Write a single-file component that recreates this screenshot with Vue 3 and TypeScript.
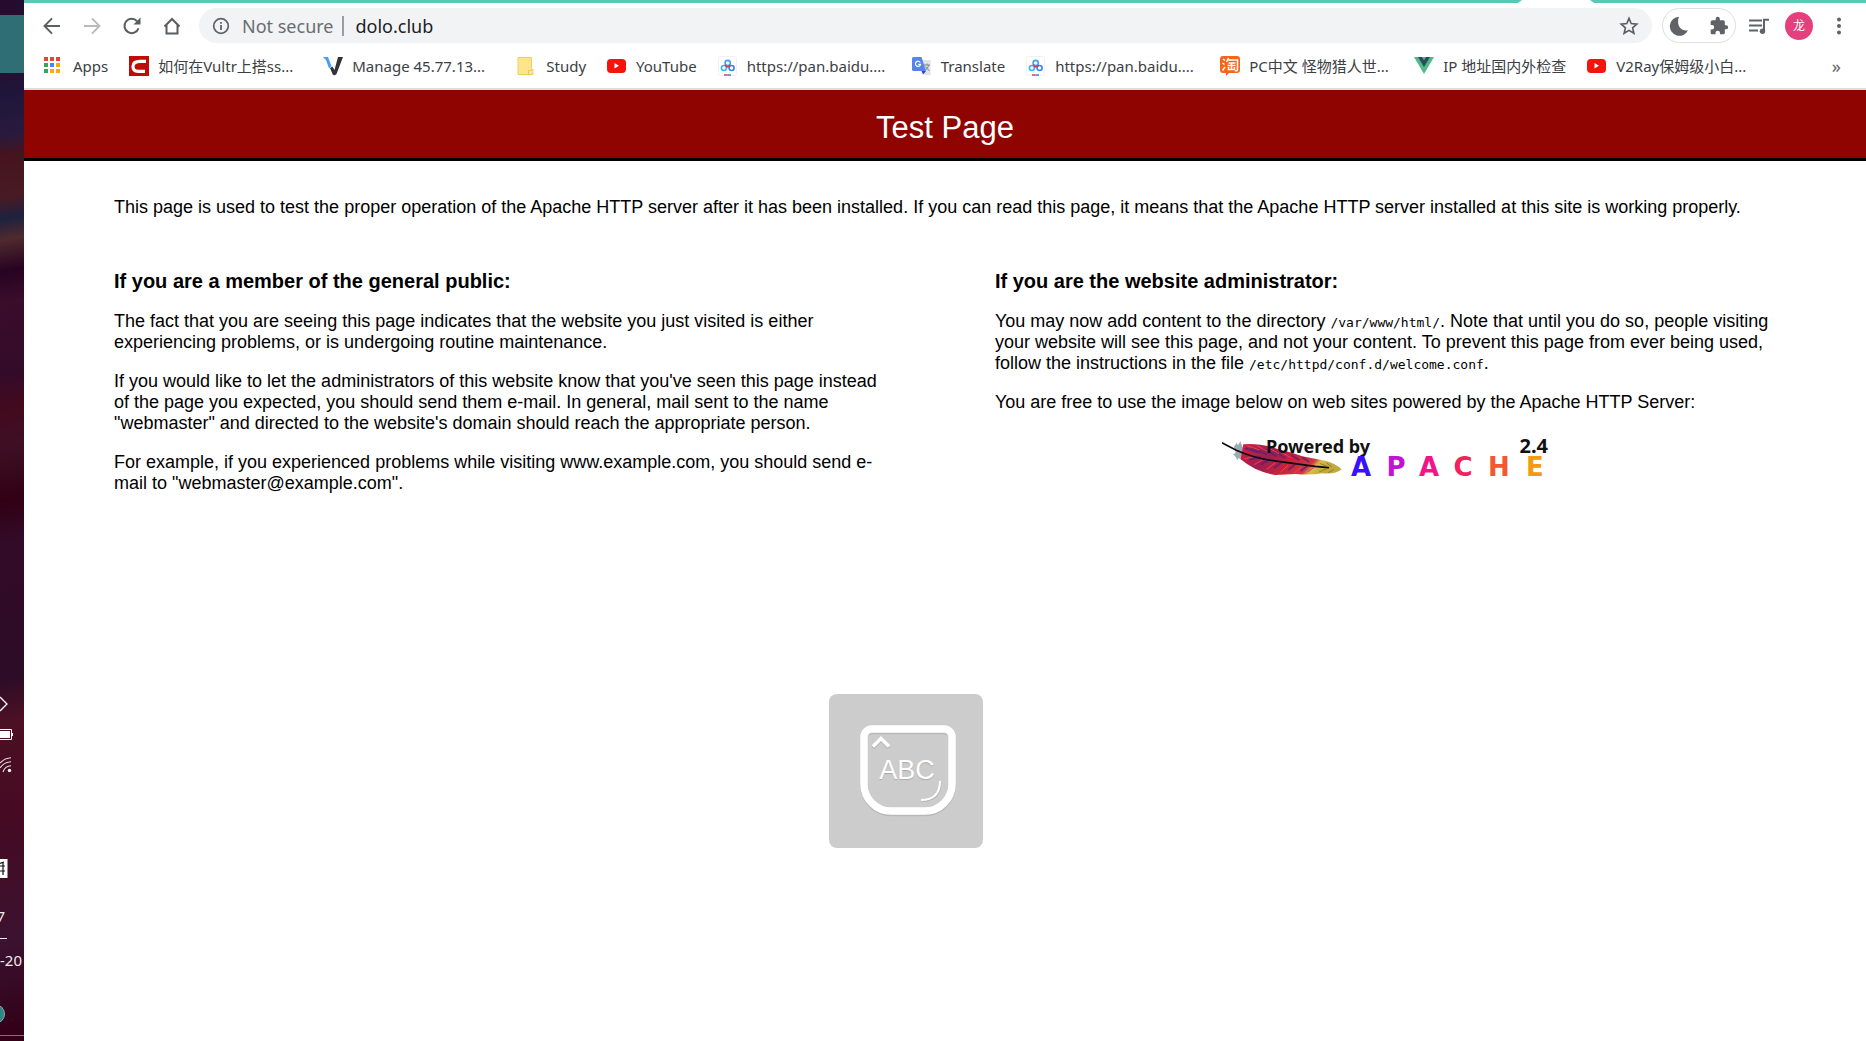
<script setup lang="ts">
import { ref } from 'vue'

type IconName = 'apps' | 'c' | 'vultr' | 'note' | 'youtube' | 'pan' | 'translate' | 'tao' | 'vue'

interface Bookmark {
  icon: IconName
  label: string
  clipped?: boolean
}

const address = ref('dolo.club')

const bookmarks: Bookmark[] = [
  { icon: 'apps', label: 'Apps' },
  { icon: 'c', label: '如何在Vultr上搭ss...', clipped: true },
  { icon: 'vultr', label: 'Manage 45.77.13...', clipped: true },
  { icon: 'note', label: 'Study' },
  { icon: 'youtube', label: 'YouTube' },
  { icon: 'pan', label: 'https://pan.baidu....', clipped: true },
  { icon: 'translate', label: 'Translate' },
  { icon: 'pan', label: 'https://pan.baidu....', clipped: true },
  { icon: 'tao', label: 'PC中文 怪物猎人世...', clipped: true },
  { icon: 'vue', label: 'IP 地址国内外检查' },
  { icon: 'youtube', label: 'V2Ray保姆级小白...', clipped: true },
]

const appColors = ['#ea4335', '#ea4335', '#ea4335', '#34a853', '#4285f4', '#fbab05', '#34a853', '#fbab05', '#fbab05']

const wordmark = [
  { letter: 'A', x: 139, color: '#3a10ff' },
  { letter: 'P', x: 174, color: '#c112d6' },
  { letter: 'A', x: 207, color: '#f31489' },
  { letter: 'C', x: 241, color: '#f2225a' },
  { letter: 'H', x: 277, color: '#f4582f' },
  { letter: 'E', x: 313, color: '#f59a0c' },
]
</script>

<template>
  <div class="screen">
    <aside class="desktop">
      <div class="tile"></div>
      <div class="tray">
        <svg class="tray-chevron" width="24" height="18" viewBox="0 0 24 18"><path d="M0 2l7 7-7 7" fill="none" stroke="#fff" stroke-width="1.3" /></svg>
        <svg class="tray-battery" width="24" height="12" viewBox="0 0 24 12"><path d="M0 .5h11.5v10H0" fill="none" stroke="#fff" /><path d="M0 2h10v7H0zM12 4h1v3h-1z" fill="#fff" /></svg>
        <svg class="tray-wifi" width="24" height="16" viewBox="0 0 24 16">
          <g fill="none" stroke="#e8dfe4" stroke-width="1.1"><path d="M0 6Q5 1 11 .8M0 11Q4 5 11 4.8M3 15Q5 9 11 8.8" /></g>
          <circle cx="9.500" cy="13.500" r="1.700" fill="#fff" />
        </svg>
        <svg class="tray-ime" width="24" height="19" viewBox="0 0 24 19"><path d="M0 0h7.500v19H0z" fill="#fff" /><path d="M0 4.500l4-1.500M0 7h5M0 12h5M3 3v13" stroke="#111" stroke-width="1.200" /></svg>
        <span class="tray-text tray-time">7</span>
        <span class="tray-rule"></span>
        <span class="tray-text">-20</span>
        <svg class="tray-orb" width="24" height="20" viewBox="0 0 24 20"><circle cx="-5" cy="10" r="9.500" fill="#2e8585" stroke="#93a6ab" /></svg>
        <span class="tray-edge"></span>
      </div>
    </aside>

    <div class="browser">
      <div class="tabs"><span class="tab-foot"></span></div>
      <nav class="toolbar" aria-label="Navigation">
        <button class="tool" aria-label="Back"><svg width="20" height="20" viewBox="0 0 20 20"><path d="M18 10H3M10 2.300L2.500 10l7.500 7.700" fill="none" stroke="#5a5d61" stroke-width="1.900" /></svg></button>
        <button class="tool" aria-label="Forward"><svg width="20" height="20" viewBox="0 0 20 20"><path d="M2 10h15M10 2.300l7.500 7.700-7.500 7.700" fill="none" stroke="#b8babc" stroke-width="1.900" /></svg></button>
        <button class="tool" aria-label="Reload"><svg width="20" height="20" viewBox="0 0 20 20"><path d="M16.500 12.200A7.200 7.200 0 1 1 15.200 5.300" fill="none" stroke="#5a5d61" stroke-width="2" /><path d="M18.500 1.500v7h-7z" fill="#5a5d61" /></svg></button>
        <button class="tool" aria-label="Home"><svg width="20" height="20" viewBox="0 0 20 20"><path d="M2.500 10.500L10 3l7.500 7.500M4.500 9v8.500h11V9" fill="none" stroke="#5a5d61" stroke-width="2" /></svg></button>

        <div class="omnibox">
          <button class="security">
            <svg width="18" height="18" viewBox="0 0 18 18"><circle cx="9" cy="9" r="7.300" fill="none" stroke="#5f6368" stroke-width="1.700" /><path d="M8.100 8h1.800v5H8.100zM8.100 4.900h1.800v1.800H8.100z" fill="#5f6368" /></svg>
            <span>Not secure</span>
          </button>
          <span class="divider"></span>
          <input v-model="address" class="address" type="text" aria-label="Address" />
          <button class="star" aria-label="Bookmark this page"><svg width="20" height="20" viewBox="0 0 20 20"><path d="M10 2.400l2.200 5.200 5.600.5-4.200 3.700 1.300 5.500L10 14.400l-4.900 2.900 1.300-5.500-4.200-3.700 5.600-.5z" fill="none" stroke="#5a5d61" stroke-width="1.600" /></svg></button>
        </div>

        <div class="extensions">
          <button class="tool" aria-label="Dark mode"><svg width="20" height="20" viewBox="0 0 20 20"><path d="M10 .800A9.500 9.500 0 1 0 19 14.200C13.500 15.800 6.500 10.500 10 .800z" fill="#5f6368" /></svg></button>
          <button class="tool" aria-label="Extensions"><svg width="20" height="20" viewBox="0 0 24 24"><path d="M20.500 11H19V7c0-1.100-.9-2-2-2h-4V3.500a2.500 2.500 0 0 0-5 0V5H4c-1.100 0-2 .9-2 2v3.800h1.500a2.700 2.700 0 0 1 0 5.400H2V20c0 1.100.9 2 2 2h3.800v-1.500a2.700 2.700 0 0 1 5.400 0V22H17c1.100 0 2-.9 2-2v-4h1.500a2.500 2.500 0 0 0 0-5z" fill="#5f6368" /></svg></button>
        </div>
        <button class="tool" aria-label="Media"><svg width="22" height="20" viewBox="0 0 22 20"><path d="M1 4.500h13M1 9.500h13M1 14.500h9" stroke="#5f6368" stroke-width="2" /><path d="M16 15V3.800h5" fill="none" stroke="#5f6368" stroke-width="2" /><circle cx="14.500" cy="15.300" r="2.700" fill="#5f6368" /></svg></button>
        <button class="tool" aria-label="Profile"><span class="avatar">龙</span></button>
        <button class="tool" aria-label="Menu"><svg width="6" height="20" viewBox="0 0 6 20"><g fill="#5f6368"><circle cx="3" cy="3.500" r="2" /><circle cx="3" cy="10" r="2" /><circle cx="3" cy="16.500" r="2" /></g></svg></button>
      </nav>

      <nav class="bookmarks" aria-label="Bookmarks">
        <a v-for="(mark, i) in bookmarks" :key="i" class="bookmark" href="#">
          <svg class="favicon" width="20" height="20" viewBox="0 0 20 20" aria-hidden="true">
            <template v-if="mark.icon === 'apps'">
              <rect v-for="(color, n) in appColors" :key="n" :x="(n % 3) * 6" :y="1 + Math.floor(n / 3) * 6" width="4" height="4" :fill="color" />
            </template>
            <template v-else-if="mark.icon === 'c'">
              <path d="M0 0h20v20H0z" fill="#c10c05" /><path d="M17 5.300h-6C6 5.300 4 7 4 10.500s1.500 4.800 5 4.800h7" fill="none" stroke="#fff" stroke-width="3.200" />
            </template>
            <template v-else-if="mark.icon === 'vultr'">
              <path d="M0 1h5l3.500 9-2.500 2.500-3-8.500z" fill="#4c9bf5" /><path d="M15 1h5l-6.500 17q-2.500 2.500-4 0L7 12l2.500-1.500 2 3.500z" fill="#30343a" />
            </template>
            <template v-else-if="mark.icon === 'note'">
              <path d="M1 1.500h13.500v12h1.500v5H1z" fill="#fce58d" stroke="#ecd05f" /><path d="M11.500 18.500v-4h3" fill="none" stroke="#e9c94f" />
            </template>
            <template v-else-if="mark.icon === 'youtube'">
              <rect x="0" y="3" width="19" height="14" rx="4" fill="#f5130b" /><path d="M7.500 7v5.500l4.500-2.700z" fill="#fff" />
            </template>
            <template v-else-if="mark.icon === 'pan'">
              <rect x=".5" y=".5" width="18" height="19" rx="2" fill="#fff" stroke="#f1f1f3" />
              <g fill="none" stroke-width="1.600"><circle cx="9.700" cy="7" r="2.600" stroke="#3ba2fa" /><circle cx="5.900" cy="12" r="2.500" stroke="#31b9f5" /><circle cx="13.600" cy="12" r="2.500" stroke="#3287f3" /><path d="M7.200 8.500Q9.500 13 12 9" stroke="#ed344b" /></g>
              <path d="M6 19h3.500" stroke="#e8384f" stroke-width="1.500" /><path d="M9.500 19H13" stroke="#397be8" stroke-width="1.500" />
            </template>
            <template v-else-if="mark.icon === 'translate'">
              <path d="M8 4h10.500v15H12z" fill="#dfe2e7" /><path d="M1.500 1h8l4.500 14H1.500Q0 15 0 13.500v-11Q0 1 1.500 1z" fill="#5684ed" /><path d="M9.500 15H14l-3 3.500z" fill="#2649b5" />
              <path d="M8.300 6.500A2.600 2.600 0 1 0 8.600 8.400H6.300" fill="none" stroke="#fff" stroke-width="1.200" /><path d="M12 9h6M15 7.500V9m1.800 0Q16 12.500 12.800 14.500M13.300 10.500Q15 13.500 17.500 14.500" fill="none" stroke="#7b858e" />
            </template>
            <template v-else-if="mark.icon === 'tao'">
              <path d="M3 0h14q3 0 3 3v11q0 3-3 3H9l-3 3v-3H3q-3 0-3-3V3q0-3 3-3z" fill="#f4661b" />
              <path d="M3 3l2 1.500M2.500 7l2 1.500M2.500 14.500L5 11M8.500 2L6.500 6M8 4h9.500v9.500q0 1.500-2.500 1.500M8.500 7h7M7.500 9.500h8M11.500 7v6M8.500 11v2.500h6V11" fill="none" stroke="#fff" stroke-width="1.500" />
            </template>
            <template v-else>
              <path d="M0 1h20L10 18z" fill="#4dba87" /><path d="M4 1h4l2 3.500L12 1h4l-6 10z" fill="#35495e" />
            </template>
          </svg>
          <span class="label" :class="{ clipped: mark.clipped }">{{ mark.label }}</span>
        </a>
        <button class="more" aria-label="More bookmarks">»</button>
      </nav>

      <main class="page">
        <h1>Test Page</h1>
        <div class="content">
          <p>This page is used to test the proper operation of the Apache HTTP server after it has been installed. If you can read this page, it means that the Apache HTTP server installed at this site is working properly.</p>
          <div class="columns">
            <section>
              <h2>If you are a member of the general public:</h2>
              <p>The fact that you are seeing this page indicates that the website you just visited is either experiencing problems, or is undergoing routine maintenance.</p>
              <p>If you would like to let the administrators of this website know that you've seen this page instead of the page you expected, you should send them e-mail. In general, mail sent to the name "webmaster" and directed to the website's domain should reach the appropriate person.</p>
              <p>For example, if you experienced problems while visiting www.example.com, you should send e-mail to "webmaster@example.com".</p>
            </section>
            <section>
              <h2>If you are the website administrator:</h2>
              <p>You may now add content to the directory <code>/var/www/html/</code>. Note that until you do so, people visiting your website will see this page, and not your content. To prevent this page from ever being used, follow the instructions in the file <code>/etc/httpd/conf.d/welcome.conf</code>.</p>
              <p>You are free to use the image below on web sites powered by the Apache HTTP Server:</p>
              <svg class="apache" width="326" height="44" viewBox="0 0 326 44" role="img" aria-label="Powered by Apache 2.4">
                <defs>
                  <linearGradient id="plume" x1="0" x2="1" y1="0" y2="0.300">
                    <stop offset="0" stop-color="#d8213d" /><stop offset="0.350" stop-color="#9b2050" /><stop offset="0.600" stop-color="#c7213d" /><stop offset="0.820" stop-color="#d13a3e" /><stop offset="0.880" stop-color="#d8b94c" /><stop offset="1" stop-color="#c3a83d" />
                  </linearGradient>
                </defs>
                <svg width="122" height="40" viewBox="69 51 366 120">
                  <path d="M105 80l8-12 4 8 7-12 5 13 6 13-6 30-11-6-3 6-7-12-6-4 8-6z" fill="#9eabb2" />
                  <path d="M133 73q50-5 112 17 40 9 65 19l68 13q32 8 50 26-16 15-58 12-35 6-80 2l-62 3q-60-10-103-47z" fill="url(#plume)" />
                  <g fill="none" stroke="#592078" stroke-width="6" opacity=".75"><path d="M138 85l45 13M155 82l48 21M190 86l43 22M225 94l34 20M278 105l23 16M310 112l21 14M150 119l35-8M185 133l30-15M225 145l24-20M268 150l20-17M305 153l20-16" /></g>
                  <g fill="none" stroke="#ed4254" stroke-width="3"><path d="M145 77l35 13M174 77l31 17M207 82l33 20M245 95l31 19M137 117l30-8M165 134l30-17M203 148l26-20M244 157l24-22M285 159l24-20M327 155l20-14" /></g>
                  <path d="M70 69l42 22q50 23 110 31t126 17l40 4" fill="none" stroke="#0d0710" stroke-width="5" stroke-linecap="round" />
                  <path d="M362 130l22 9M382 128l17 13M360 156l23-10M387 158l17-9" stroke="#8e832f" stroke-width="3" />
                </svg>
                <text x="44" y="16" class="powered">Powered by</text>
                <text x="326" y="16" class="version">2.4</text>
                <text v-for="(glyph, i) in wordmark" :key="i" :x="glyph.x" y="39" class="mark" :fill="glyph.color">{{ glyph.letter }}</text>
              </svg>
            </section>
          </div>
        </div>
      </main>
    </div>

    <div class="ime" aria-hidden="true">
      <svg width="154" height="154" viewBox="0 0 154 154">
        <path d="M43 36.500h72a8 8 0 0 1 8 8v47a27 27 0 0 1-27 27H62a27 27 0 0 1-27-27v-47a8 8 0 0 1 8-8z" fill="none" stroke="#b8b8b8" stroke-width="7.500" />
        <path d="M43 35h72a8 8 0 0 1 8 8v47a27 27 0 0 1-27 27H62a27 27 0 0 1-27-27V43a8 8 0 0 1 8-8z" fill="none" stroke="#fff" stroke-width="7.500" />
        <path d="M44 54l8-8 8 8" fill="none" stroke="#b5b5b5" stroke-width="3.500" />
        <path d="M44 52.500l8-8 8 8" fill="none" stroke="#fff" stroke-width="3.500" />
        <path d="M111.500 88q0 19-19 19" fill="none" stroke="#b5b5b5" stroke-width="2" />
        <path d="M111 87q0 19-19 19" fill="none" stroke="#fff" stroke-width="2" />
        <text x="78" y="85">ABC</text>
      </svg>
    </div>
  </div>
</template>

<style>
body {
  margin: 0;
  background: #fff;
}
</style>

<style scoped>
.screen {
  display: flex;
  position: relative;
  min-height: 100vh;
  font-family: "Noto Sans", "Noto Sans CJK SC", sans-serif;
}

button {
  padding: 0;
  border: 0;
  background: none;
  font: inherit;
  color: inherit;
}

.desktop {
  display: flex;
  flex: none;
  flex-direction: column;
  width: 24px;
  overflow: hidden;
  background: linear-gradient(170deg, #270b2e 0%, #270f2f 6%, #1e163a 9%, #281a3e 13%, #46131f 15%, #471b24 19%, #1e213e 21%, #4f2a2e 23%, #270322 26%, #3a0d2a 29%, #330b29 36%, #430a1d 39%, #3e0f24 43%, #310014 48%, #330b28 52%, #2c0c27 65%, #4c1024 69%, #460a22 78%, #3b1230 90%, #330018 99%);
}

.tile {
  height: 58px;
  margin-top: 15px;
  background: #2e6e74;
}

.tray {
  display: flex;
  flex-direction: column;
  margin-top: auto;
}

.tray svg {
  display: block;
}

.tray-battery {
  margin-top: 16px;
}

.tray-wifi {
  margin-top: 16px;
}

.tray-ime {
  margin-top: 86px;
}

.tray-text {
  height: 20px;
  color: #f2eaf0;
  font-size: 15px;
  line-height: 20px;
  white-space: nowrap;
}

.tray-time {
  display: flex;
  justify-content: flex-end;
  width: 5px;
  margin-top: 28px;
}

.tray-rule {
  width: 7px;
  height: 1px;
  margin: 12px 0 11px;
  background: #f2eaf0;
}

.tray-orb {
  margin-top: 34px;
}

.tray-edge {
  height: 1px;
  margin: 11px 0 5px;
  background: #8d6680;
}

.browser {
  flex: 1;
  min-width: 0;
  background: #fff;
}

.tabs {
  display: flex;
  justify-content: flex-end;
  height: 3px;
  background: #58c9b5;
}

.tab-foot {
  width: 76px;
  margin-right: 272px;
  background: #fff;
  clip-path: polygon(4px 0, calc(100% - 4px) 0, 100% 100%, 0 100%);
}

.toolbar {
  display: flex;
  align-items: center;
  padding: 5px 7px 0 8px;
}

.tool {
  display: flex;
  flex: none;
  align-items: center;
  justify-content: center;
  width: 40px;
  height: 35px;
}

.omnibox {
  display: flex;
  flex: 1;
  align-items: center;
  min-width: 0;
  height: 35px;
  margin: 0 7px;
  padding: 0 13px;
  border-radius: 18px;
  background: #f1f3f4;
  font-size: 18px;
}

.security {
  display: flex;
  align-items: center;
  gap: 12px;
  color: #6a6d71;
}

.divider {
  width: 2px;
  height: 20px;
  margin: 0 12px 0 8px;
  background: #9a9da1;
}

.address {
  flex: 1;
  min-width: 0;
  padding: 0;
  border: 0;
  outline: 0;
  background: none;
  color: #202124;
  font: inherit;
}

.star {
  display: flex;
}

.extensions {
  display: flex;
  position: relative;
}

.extensions::before {
  content: "";
  position: absolute;
  inset: 0 3px;
  border: 1px solid #dcdee0;
  border-radius: 18px;
}

.avatar {
  width: 28px;
  height: 28px;
  border-radius: 50%;
  background: #e5407d;
  color: #fff;
  font-size: 12px;
  line-height: 28px;
  text-align: center;
}

.bookmarks {
  display: flex;
  align-items: center;
  gap: 21px;
  height: 45px;
  padding: 0 25px 0 20px;
  border-bottom: 2px solid #dadfe0;
  font-size: 15px;
  line-height: 20px;
  white-space: nowrap;
}

.bookmark {
  display: flex;
  flex: none;
  align-items: center;
  gap: 9px;
  color: #3c4043;
  text-decoration: none;
}

.favicon {
  flex: none;
}

.clipped {
  width: 144px;
}

.more {
  margin-left: auto;
  color: #5f6368;
  font-size: 18px;
}

.page {
  color: #000;
  font-family: "Liberation Sans", Arial, sans-serif;
  font-size: 18px;
  line-height: 21px;
}

h1 {
  margin: 0;
  padding: 18px 0 10px;
  border-bottom: 3px solid #000;
  background: #900400;
  color: #fff;
  font-size: 31px;
  font-weight: 400;
  line-height: 40px;
  text-align: center;
}

.content {
  padding: 36px 90px 0;
}

p {
  margin: 0 0 18px;
}

.columns {
  display: flex;
  justify-content: space-between;
  margin-top: 52px;
}

section {
  width: 47%;
}

h2 {
  margin: 0 0 18px;
  font-size: 20px;
  line-height: 23px;
}

code {
  font-family: "DejaVu Sans Mono", monospace;
  font-size: 13px;
  line-height: 1;
}

.apache {
  display: block;
  margin: 24px auto 0;
  overflow: visible;
}

.powered,
.version {
  fill: #111;
  font-family: "Noto Sans", sans-serif;
  font-size: 18px;
  font-weight: 700;
}

.version {
  font-size: 20px;
  text-anchor: end;
}

.mark {
  font-family: "DejaVu Sans", sans-serif;
  font-size: 26px;
  font-weight: 700;
  text-anchor: middle;
}

.ime {
  position: absolute;
  bottom: 193px;
  left: calc(50% - 104px);
  width: 154px;
  height: 154px;
  border-radius: 8px;
  background: #ccc;
}

.ime text {
  fill: #fff;
  font-family: "Liberation Sans", Arial, sans-serif;
  font-size: 27px;
  text-anchor: middle;
  text-shadow: 0 1px 1px #aaa;
}
</style>
